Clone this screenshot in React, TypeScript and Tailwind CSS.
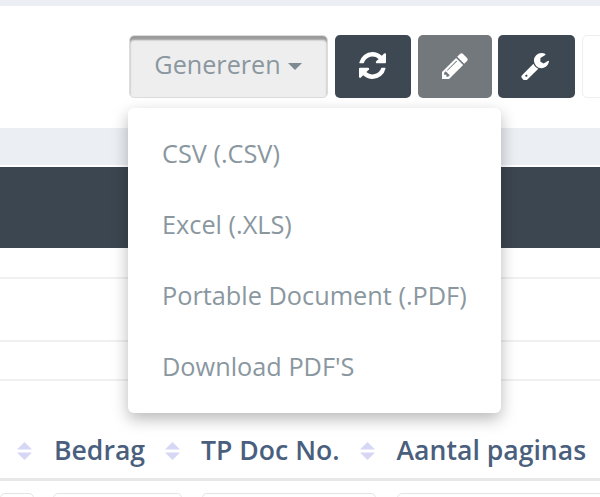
const menuItems = ['CSV (.CSV)', 'Excel (.XLS)', 'Portable Document (.PDF)', "Download PDF'S"]

function SortIcon() {
  return (
    <svg width="15" height="20" viewBox="0 0 15 20" className="shrink-0 fill-[#d5d7f5]">
      <path d="M7.5 1 L15 8.5 H0 Z" />
      <path d="M7.5 19 L15 11.5 H0 Z" />
    </svg>
  )
}

function RefreshIcon() {
  return (
    <svg width="27" height="27" viewBox="128 128 1536 1536" fill="currentColor">
      <path d="M1639 1056q0 5-1 7-64 268-268 434.5t-478 166.5q-146 0-282.5-55t-243.5-157l-129 129q-19 19-45 19t-45-19-19-45v-448q0-26 19-45t45-19h448q26 0 45 19t19 45-19 45l-137 137q71 66 161 102t187 36q134 0 250-65t186-179q11-17 53-117 8-23 30-23h192q13 0 22.5 9.5t9.5 22.5zm25-800v448q0 26-19 45t-45 19h-448q-26 0-45-19t-19-45 19-45l138-138q-148-137-349-137-134 0-250 65t-186 179q-11 17-53 117-8 23-30 23h-199q-13 0-22.5-9.5t-9.5-22.5v-7q65-268 270-434.5t480-166.5q146 0 284 55.5t245 156.5l130-129q19-19 45-19t45 19 19 45z" />
    </svg>
  )
}

function PencilIcon() {
  return (
    <svg width="26" height="26" viewBox="128 128 1536 1536" fill="currentColor">
      <path d="M491 1536l91-91-235-235-91 91v107h128v128h107zm523-928q0-22-22-22-10 0-17 7l-542 542q-7 7-7 17 0 22 22 22 10 0 17-7l542-542q7-7 7-17zm-54-192l416 416-832 832h-416v-416zm683 96q0 53-37 90l-166 166-416-416 166-165q36-38 90-38 53 0 91 38l235 234q37 39 37 91z" />
    </svg>
  )
}

function WrenchIcon() {
  return (
    <svg width="28" height="28" viewBox="64 64 1664 1664" fill="currentColor">
      <path d="M448 1472q0-26-19-45t-45-19-45 19-19 45 19 45 45 19 45-19 19-45zm644-420l-682 682q-37 37-90 37-52 0-91-37l-106-108q-38-36-38-90 0-53 38-91l681-681q39 98 114.5 173.5t173.5 114.5zm634-435q0 39-23 106-47 134-164.5 217.5t-258.5 83.5q-185 0-316.5-131.5t-131.5-316.5 131.5-316.5 316.5-131.5q58 0 121.5 16.5t107.5 46.5q16 11 16 28t-16 28l-293 169v224l193 107q5-3 79-48.5t135.5-81 70.5-35.5q15 0 23.5 10t8.5 25z" />
    </svg>
  )
}

export default function App() {
  return (
    <div
      className="relative h-[497px] w-[600px] overflow-hidden bg-white"
      style={{ fontFamily: '"Open Sans", "Noto Sans", sans-serif' }}
    >
      <div className="h-[6px] bg-[#ebeef3]" />

      {/* toolbar */}
      <div className="flex h-[122px] pl-[129px] pt-[29px]">
        <button className="flex h-[63px] w-[199px] shrink-0 items-center justify-center gap-[7px] rounded-[5px] border border-[#dcdcdc] bg-[#eeeeee] pb-[3px] pr-[1px] text-[25.2px] text-[#8a979f] shadow-[inset_0_4px_2px_#9a9a9a]">
          Genereren
          <span className="mt-[3px] h-0 w-0 border-x-[7px] border-t-[7px] border-x-transparent border-t-[#7d8a92]" />
        </button>
        <button className="ml-[7px] flex h-[63px] w-[76px] shrink-0 items-center justify-center rounded-[5px] bg-[#3e4852] pb-[2px] pr-[2px] text-white">
          <RefreshIcon />
        </button>
        <button className="ml-[7px] flex h-[63px] w-[74px] shrink-0 items-center justify-center rounded-[5px] bg-[#73787c] pb-[2px] text-white">
          <PencilIcon />
        </button>
        <button className="ml-[6px] flex h-[63px] w-[77px] shrink-0 items-center justify-center rounded-[5px] bg-[#3e4852] pb-[2px] pr-[3px] text-white">
          <WrenchIcon />
        </button>
        <div className="ml-[7px] h-[63px] w-[60px] shrink-0 rounded-[5px] border border-[#eceef0] bg-white" />
      </div>

      {/* table */}
      <div className="h-[37px] bg-[#ebeef3]" />
      <div className="h-[2px] bg-white" />
      <div className="h-[81px] bg-[#3c4650]" />
      <div className="h-[31px] border-b-2 border-[#f0f0f0]" />
      <div className="h-[63px] border-b-2 border-[#f0f0f0]" />
      <div className="h-[39px] border-b-2 border-[#f0f0f0]" />

      <div className="flex h-[100px] items-center whitespace-nowrap border-b-[3px] border-[#e8e8e8] pl-[17px] pt-[42px] text-[26.6px] font-semibold text-[#4a5f7d]">
        <SortIcon />
        <span className="ml-[22px]">Bedrag</span>
        <span className="ml-[20px]"><SortIcon /></span>
        <span className="ml-[21px]">TP Doc No.</span>
        <span className="ml-[20px]"><SortIcon /></span>
        <span className="ml-[22px]">Aantal paginas</span>
      </div>

      <div className="mt-[12px] flex">
        <div className="h-[20px] w-[34px] shrink-0 rounded-[5px] border border-[#e3e3e3]" />
        <div className="ml-[19px] h-[20px] w-[129px] shrink-0 rounded-[5px] border border-[#e3e3e3]" />
        <div className="ml-[20px] h-[20px] w-[174px] shrink-0 rounded-[5px] border border-[#e3e3e3]" />
        <div className="ml-[21px] h-[20px] w-[220px] shrink-0 rounded-[5px] border border-[#e3e3e3]" />
      </div>

      {/* dropdown */}
      <div className="absolute left-[128px] top-[108px] flex h-[305px] w-[373px] flex-col justify-between rounded-[6px] bg-white py-[27px] pl-[34px] text-[25.3px] text-[#8a979f] shadow-[0_6px_16px_rgba(0,0,0,0.28)]">
        {menuItems.map((item) => (
          <div key={item}>{item}</div>
        ))}
      </div>
    </div>
  )
}
